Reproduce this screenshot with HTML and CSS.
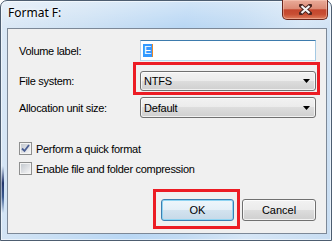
FILE: index.html
```html
<!DOCTYPE html>
<html lang="en">
<head>
  <meta charset="UTF-8">
  <title>Format F:</title>
  <link rel="stylesheet" href="styles.css">
</head>
<body>
  <div class="window">
    <div class="titlebar">
      <span class="title">Format F:</span>
      <div class="close">
        <svg width="13" height="11" viewBox="0 0 13 11">
          <path d="M2 1.5 L11 9.5 M11 1.5 L2 9.5" stroke="#4a2520" stroke-width="4" stroke-linecap="square"/>
          <path d="M2.5 2 L10.5 9 M10.5 2 L2.5 9" stroke="#f4f4f4" stroke-width="2.2"/>
        </svg>
      </div>
    </div>

    <div class="client">
      <div class="row row-first">
        <label class="label">Volume label:</label>
        <div class="edit"><span class="sel">E</span><span class="caret"></span></div>
      </div>
      <div class="row row-fs">
        <label class="label">File system:</label>
        <div class="combo">
          <span>NTFS</span>
          <svg class="arrow" width="7" height="4" viewBox="0 0 7 4"><path d="M0 0 H7 L3.5 4 Z" fill="#000"/></svg>
        </div>
      </div>
      <div class="row row-alloc">
        <label class="label">Allocation unit size:</label>
        <div class="combo">
          <span>Default</span>
          <svg class="arrow" width="7" height="4" viewBox="0 0 7 4"><path d="M0 0 H7 L3.5 4 Z" fill="#000"/></svg>
        </div>
      </div>

      <div class="check-row check-first">
        <span class="checkbox">
          <svg width="9" height="9" viewBox="0 0 9 9"><path d="M1 4.5 L3.5 7 L8 1" stroke="#4b5f94" stroke-width="1.8" fill="none"/></svg>
        </span>
        Perform a quick format
      </div>
      <div class="check-row check-second">
        <span class="checkbox"></span>
        Enable file and folder compression
      </div>

      <div class="buttons">
        <button class="btn btn-default">OK</button>
        <button class="btn">Cancel</button>
      </div>
    </div>

    <!-- red annotation boxes drawn over the dialog -->
    <div class="mark mark-fs"></div>
    <div class="mark mark-ok"></div>
  </div>
</body>
</html>
```

FILE: styles.css
```css
body {
  margin: 0;
  width: 332px;
  height: 243px;
  background: #ffffff;
  overflow: hidden;
  font-family: "Liberation Sans", Arial, sans-serif;
  font-size: 11px;
  color: #000;
}

.window {
  position: relative;
  box-sizing: border-box;
  width: 332px;
  height: 241px;
  padding: 0 4px 6px 6px;
  border: 1px solid #4d5d70;
  border-radius: 7px 7px 0 0;
  box-shadow: inset 0 0 0 1px rgba(255, 255, 255, 0.55);
  background:
    linear-gradient(to bottom, transparent 165px, #22356b 182px, #3a5a90 196px, transparent 212px) left top / 3px 100% no-repeat,
    linear-gradient(to bottom, rgba(255, 255, 255, 0.35), rgba(255, 255, 255, 0) 26px),
    linear-gradient(105deg, #dce9f6 0%, #cfe2f4 22%, #b9d7f4 48%, #c2dbf3 62%, #d6e6f6 78%, #c8ddf2 100%);
}

.titlebar {
  height: 27px;
  display: flex;
  justify-content: space-between;
  align-items: flex-start;
}

.title {
  margin: 5px 0 0 1px;
  font-family: "Noto Sans", "Open Sans", sans-serif;
  font-size: 12px;
  line-height: 14px;
  color: #000;
  text-shadow: 0 0 6px #fff, 0 0 3px #fff;
}

.close {
  box-sizing: border-box;
  width: 46px;
  height: 20px;
  margin: -1px -1px 0 0;
  display: flex;
  justify-content: center;
  align-items: center;
  border: 1px solid #6b271d;
  border-top: none;
  border-radius: 0 0 5px 5px;
  background: linear-gradient(#e9ab99 0%, #dc8b76 45%, #c4462e 52%, #c84e33 75%, #de7e5e 100%);
  box-shadow: inset 0 0 0 1px rgba(255, 210, 195, 0.45);
}

.client {
  box-sizing: border-box;
  height: 206px;
  padding: 11px 10px 0 11px;
  border: 1px solid #7c8897;
  background: #f0f0f0;
}

.row {
  display: flex;
  align-items: center;
}

.row-first { height: 21px; }
.row-fs { height: 20px; margin-top: 10px; }
.row-alloc { height: 21px; margin-top: 6px; }

.label {
  width: 121px;
  letter-spacing: -0.3px;
}

.edit {
  box-sizing: border-box;
  width: 176px;
  height: 21px;
  display: flex;
  align-items: center;
  padding-left: 2px;
  background: #fff;
  border: 1px solid;
  border-color: #3d7bad #a4c9e3 #b7d9ed #b5cfe7;
}

.sel {
  background: #3399ff;
  color: #fff;
  padding: 0 1px;
  line-height: 13px;
}

.caret {
  width: 1px;
  height: 13px;
  background: #e8892a;
}

.combo {
  box-sizing: border-box;
  width: 176px;
  height: 100%;
  display: flex;
  align-items: center;
  justify-content: space-between;
  padding: 0 5px 0 3px;
  border: 1px solid #707070;
  border-radius: 3px;
  background: linear-gradient(#f2f2f2 0%, #ebebeb 50%, #dddddd 50%, #cfcfcf 100%);
  box-shadow: inset 0 0 0 1px rgba(255, 255, 255, 0.7);
  letter-spacing: -0.2px;
}

.check-row {
  height: 15px;
  display: flex;
  align-items: center;
  letter-spacing: -0.3px;
}

.check-first { margin-top: 23px; }
.check-second { margin-top: 5px; }

.checkbox {
  box-sizing: border-box;
  width: 13px;
  height: 13px;
  margin-right: 4px;
  padding: 1px;
  display: flex;
  border: 1px solid #8e8f8f;
  background: linear-gradient(135deg, #c4c9cf, #f5f5f6) content-box, #f4f4f4;
}

.checkbox svg {
  display: block;
}

.buttons {
  margin-top: 23px;
  display: flex;
  justify-content: flex-end;
  gap: 8px;
}

.btn {
  box-sizing: border-box;
  width: 74px;
  height: 22px;
  padding: 0;
  font-family: "Liberation Sans", Arial, sans-serif;
  font-size: 11px;
  color: #000;
  border: 1px solid #707070;
  border-radius: 3px;
  background: linear-gradient(#f2f2f2 0%, #ebebeb 50%, #dddddd 50%, #cfcfcf 100%);
  box-shadow: inset 0 0 0 1px rgba(255, 255, 255, 0.75);
}

.btn-default {
  width: 73px;
  border-color: #3c7fb1;
  background: linear-gradient(#eef6fb 0%, #e4eff7 50%, #d3e3ef 50%, #c6d9e8 100%);
  box-shadow: inset 0 0 0 1px #8fd4f2;
}

.mark {
  position: absolute;
  box-sizing: border-box;
  border: 3px solid #ec1c24;
}

.mark-fs {
  left: 132px;
  top: 61px;
  width: 187px;
  height: 33px;
}

.mark-ok {
  left: 152px;
  top: 188px;
  width: 87px;
  height: 40px;
}
```
